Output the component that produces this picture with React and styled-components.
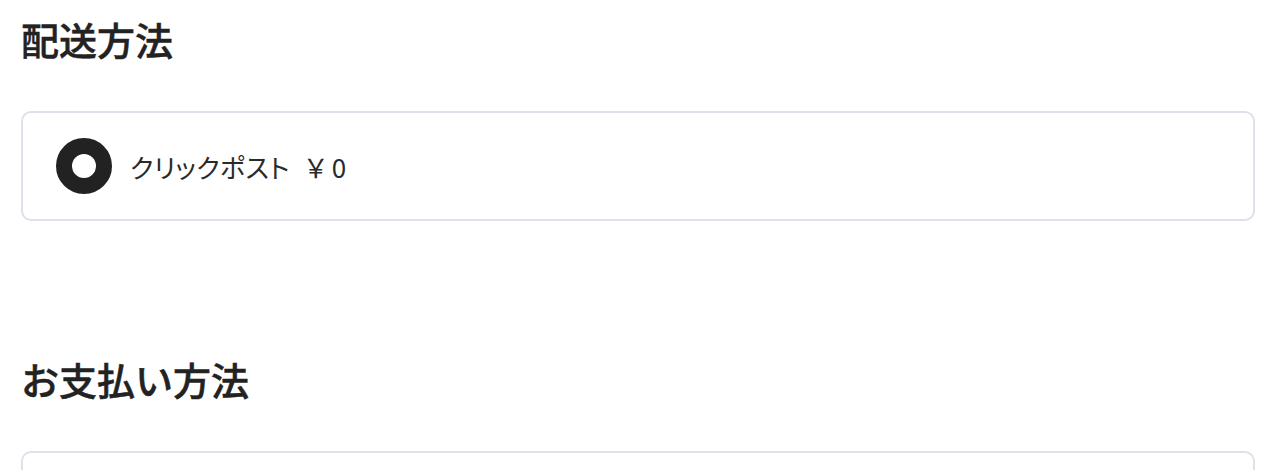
import React, { useState } from 'react';
import styled, { createGlobalStyle } from 'styled-components';

const GlobalStyle = createGlobalStyle`
    body {
        margin: 0;
        background: #fff;
        font-family: "Noto Sans CJK JP", "Noto Sans", sans-serif;
        color: #222;
    }
`;

const Checkout = () => {
    const [ shipping, setShipping ] = useState('clickpost');
    const [ payment, setPayment ] = useState('card');

    return (
        <Wrapper>
            <Section>
                <Title>配送方法</Title>
                <OptionBox>
                    <Option onClick={() => setShipping('clickpost')}>
                        <Radio checked={shipping === 'clickpost'} />
                        <OptionLabel>クリックポスト<Price>￥0</Price></OptionLabel>
                    </Option>
                </OptionBox>
            </Section>
            <Section>
                <Title>お支払い方法</Title>
                <OptionBox>
                    <Option onClick={() => setPayment('card')}>
                        <Radio checked={payment === 'card'} />
                        <OptionLabel>クレジットカード</OptionLabel>
                    </Option>
                </OptionBox>
            </Section>
        </Wrapper>
    )
}

const Wrapper = styled.div`
    display: flex;
    flex-direction: column;
    gap: 129px;
    padding: 10px 25px 40px 21px;
`;
const Section = styled.section`
    display: flex;
    flex-direction: column;
    gap: 43px;
`;
const Title = styled.h2`
    margin: 0;
    font-size: 38px;
    line-height: 58px;
    font-weight: 500;
    color: #222;
    -webkit-text-stroke: 0.5px #222;
`;
const OptionBox = styled.div`
    border: 2px solid #dfe1ea;
    border-radius: 10px;
    background: #fff;
`;
const Option = styled.label`
    display: flex;
    align-items: center;
    gap: 18px;
    height: 106px;
    padding-left: 33px;
    cursor: pointer;
`;
const Radio = styled.span`
    box-sizing: border-box;
    width: 56px;
    height: 56px;
    border-radius: 50%;
    border: ${({checked}) => checked ? '16px' : '3px'} solid #222;
    background: #fff;
    flex-shrink: 0;
`;
const OptionLabel = styled.span`
    font-size: 26px;
    font-weight: 400;
    color: #2a2a2a;
    letter-spacing: 0.4px;
    font-feature-settings: "palt";
`;
const Price = styled.span`
    margin-left: 13px;
    letter-spacing: 3px;
    font-feature-settings: normal;
`;

const App = () => (
    <>
        <GlobalStyle />
        <Checkout />
    </>
);

export default App;
